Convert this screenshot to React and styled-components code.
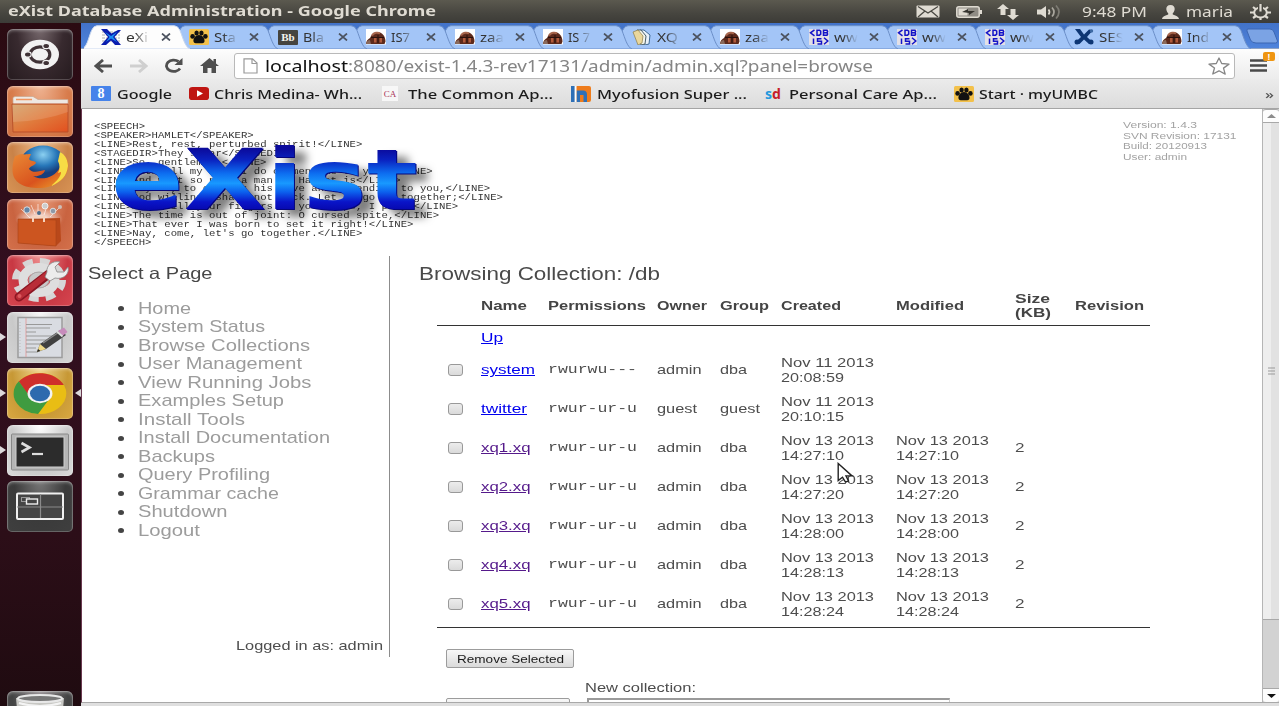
import React, { useLayoutEffect, useRef, useState } from 'react';
import styled, { createGlobalStyle } from 'styled-components';

const UI = '"Noto Sans", "Open Sans", sans-serif';
const SANS = '"Liberation Sans", Arial, sans-serif';
const MONO = '"Liberation Mono", "Courier New", monospace';

const Global = createGlobalStyle`
  * { box-sizing: border-box; }
  body { margin: 0; overflow: hidden; background: #fff; font-family: ${SANS}; }
  svg { display: block; flex: none; }
`;

/* Text stretched horizontally to a fixed width */
const FitBox = styled.span`
  display: inline-block;
  flex: none;
  width: ${(p) => p.$w}px;
  white-space: nowrap;
`;
const FitInner = styled.span`
  display: inline-block;
  white-space: pre;
  transform-origin: 0 50%;
`;
function Fit({ w, children }) {
  const ref = useRef(null);
  const [k, setK] = useState(1);
  useLayoutEffect(() => {
    const measure = () => setK(w / parseFloat(getComputedStyle(ref.current).width));
    measure();
    document.fonts.ready.then(() => ref.current && measure());
  }, [w]);
  return (
    <FitBox $w={w}>
      <FitInner ref={ref} style={{ transform: `scaleX(${k})` }}>{children}</FitInner>
    </FitBox>
  );
}

const Desktop = styled.div`
  width: 1279px;
  height: 706px;
  overflow: hidden;
  display: flex;
  flex-direction: column;
  position: relative;
`;

/* ---------- system panel ---------- */
const Panel = styled.header`
  height: 23px;
  flex: none;
  display: flex;
  align-items: center;
  padding: 0 8px;
  background: linear-gradient(#5b594f, #46453f 60%, #3c3b37);
  color: #dfdbd2;
  font: 14px/23px ${UI};
`;
const Title = styled.div`
  font-weight: 700;
  font-size: 13.5px;
  flex: 1;
`;
const Indicators = styled.div`
  display: flex;
  align-items: center;
`;
const Gap = styled.i`
  width: ${(p) => p.$w}px;
  flex: none;
`;

/* ---------- launcher ---------- */
const Body = styled.div`
  flex: 1;
  display: flex;
  min-height: 0;
`;
const Launcher = styled.nav`
  width: 81px;
  flex: none;
  padding: 6px 0 0 7px;
  background: linear-gradient(#2b0b12, #330f20 40%, #2c0e18 75%, #1f0b10);
  display: flex;
  flex-direction: column;
  gap: 5.5px;
`;
const Tile = styled.div`
  position: relative;
  width: 66px;
  height: 51px;
  flex: none;
  border-radius: 6px 6px 5px 5px;
  background: ${(p) => p.$bg};
  box-shadow: inset 0 0 0 1px rgba(255, 255, 255, 0.2), inset 0 2px 3px rgba(255, 255, 255, 0.3);
  margin-top: ${(p) => p.$top || 0}px;
`;
const Running = styled.i`
  position: absolute;
  top: 21px;
  left: -7px;
  border: solid transparent;
  border-width: 4.5px 0 4.5px 6px;
  border-left-color: #dcd8da;
`;
const Focused = styled.i`
  position: absolute;
  top: 21px;
  right: -8px;
  border: solid transparent;
  border-width: 4.5px 6px 4.5px 0;
  border-right-color: #dcd8da;
`;

/* ---------- browser ---------- */
const Browser = styled.main`
  flex: 1;
  min-width: 0;
  display: flex;
  flex-direction: column;
  background: #dfdfdf;
`;
const TabStrip = styled.div`
  height: 26px;
  flex: none;
  display: flex;
  padding: 2px 0 0 3px;
  background: linear-gradient(#4272c8, #4f84dc);
  border-bottom: 1px solid #8fa3c4;
`;
const Tab = styled.div`
  position: relative;
  width: 88.45px;
  height: 24px;
  flex: none;
  z-index: ${(p) => p.$z};
  padding-left: 17px;
`;
const TabShape = styled.svg`
  position: absolute;
  left: 0;
  top: 0;
`;
const TabInner = styled.div`
  position: relative;
  height: 24px;
  display: flex;
  align-items: center;
`;
const TabText = styled.div`
  width: 25px;
  margin-left: 5px;
  overflow: hidden;
  font: 13px/22px ${UI};
  color: #333;
  mask-image: linear-gradient(90deg, #000 35%, transparent 95%);
`;
const CloseX = styled.svg`
  margin-left: 10px;
`;
const NewTab = styled.svg`
  margin: 3px 0 0 11px;
`;
const Toolbar = styled.div`
  height: 30px;
  flex: none;
  display: flex;
  align-items: center;
  padding: 3px 12px 0 13px;
  background: linear-gradient(#fdfdfd, #ececec);
`;
const UrlBox = styled.div`
  width: 1001px;
  height: 26px;
  margin-left: 15px;
  padding: 0 4px 0 8px;
  border: 1px solid #b9b9b9;
  border-radius: 3px;
  background: #fff;
  display: flex;
  align-items: center;
  font: 15.5px/24px ${UI};
  color: #858585;
`;
const Host = styled.span`
  color: #111;
  margin-left: 7px;
`;
const Spacer = styled.i`
  flex: 1;
`;
const MenuButton = styled.div`
  position: relative;
  margin-left: 15px;
`;
const Alert = styled.span`
  position: absolute;
  left: 13px;
  top: -7px;
  width: 12px;
  height: 9px;
  border-radius: 2px;
  background: #ef9511;
  color: #fff;
  font: 700 8px/9px ${UI};
  text-align: center;
`;
const Bookmarks = styled.div`
  height: 30px;
  flex: none;
  padding: 0 4px 0 10px;
  display: flex;
  align-items: center;
  background: linear-gradient(#ebebeb, #dcdcdc);
  border-bottom: 1px solid #a5a5a5;
  color: #1b1b1b;
  font: 500 13px/22px ${UI};
`;
const Bookmark = styled.div`
  display: flex;
  align-items: center;
  gap: ${(p) => p.$gap}px;
  margin-right: ${(p) => p.$mr}px;
`;
const Glyph = styled.span`
  width: ${(p) => p.$w}px;
  height: 15px;
  display: flex;
  align-items: center;
  justify-content: center;
  border-radius: ${(p) => p.$r || 0}px;
  background: ${(p) => p.$bg || 'none'};
  color: ${(p) => p.$c};
  font: ${(p) => p.$font};
`;

/* ---------- page ---------- */
const Viewport = styled.div`
  height: 594px;
  flex: none;
  display: flex;
  background: #fff;
  border-left: 1px solid #6a3a50;
  border-bottom: 1px solid #a9a9a9;
`;
const Page = styled.div`
  flex: 1;
  overflow: hidden;
  color: #4d4d4d;
  font: 13px/14.5px ${SANS};
`;
const PageHead = styled.div`
  height: 147px;
  display: flex;
  justify-content: space-between;
  padding: 14px 25px 0 12px;
`;
const Logo = styled.div`
  position: relative;
`;
const Speech = styled.div`
  display: flex;
  flex-direction: column;
  font: 8.2px/8.92px ${MONO};
  color: #333;
`;
const LogoWord = styled.div`
  position: absolute;
  left: 17px;
  top: 15px;
  font: 700 84px/84px "DejaVu Sans", Verdana, sans-serif;
  filter: drop-shadow(1px 1px 0 #05057a) drop-shadow(11px 7px 4px rgba(0, 0, 0, 0.5));
  ${FitInner} {
    color: transparent;
    background: linear-gradient(#0b0b9c 13%, #0a22c0 26%, #0d6df0 42%, #1899ff 54%, #0c62ee 64%, #0a14c8 76%, #0606a8 88%);
    background-clip: text;
  }
`;
const Version = styled.div`
  display: flex;
  flex-direction: column;
  width: 114px;
  font-size: 9.6px;
  line-height: 10.7px;
  margin-top: -3px;
  color: #a3a3a3;
`;
const Columns = styled.div`
  display: flex;
`;
const Side = styled.aside`
  width: 308px;
  height: 401px;
  flex: none;
  border-right: 1px solid #8c8c8c;
  padding: 8px 6px 0 6px;
  display: flex;
  flex-direction: column;
`;
const SideTitle = styled.div`
  font-size: 16.5px;
  line-height: 19px;
  color: #474747;
`;
const NavList = styled.ul`
  list-style: none;
  margin: 15.5px 0 0;
  padding: 0 0 0 30px;
  flex: 1;
`;
const NavItem = styled.li`
  height: 18.53px;
  display: flex;
  align-items: center;
  font-size: 16.2px;
  line-height: 18.5px;
  color: #9c9c9c;
`;
const Bullet = styled.i`
  width: 6px;
  height: 5px;
  margin: 2px 14px 0 0;
  border-radius: 50%;
  background: #444;
`;
const LoggedIn = styled.div`
  align-self: flex-end;
  margin-bottom: 4px;
`;
const Content = styled.section`
  padding: 8px 0 0 29px;
`;
const ContentTitle = styled.div`
  font-size: 17.6px;
  line-height: 20px;
  color: #4a4a4a;
`;
const Table = styled.div`
  margin: 2px 0 0 18px;
  width: 713px;
  border-bottom: 1px solid #333;
  padding-bottom: 3px;
`;
const Row = styled.div`
  display: grid;
  grid-template-columns: 43.5px 67px 109.5px 62.5px 61px 115px 119px 60px 74.500px;
  align-items: center;
  height: ${(p) => p.$h}px;
  ${(p) => p.$head && 'font-weight: 700; border-bottom: 1px solid #333; color: #444; padding-top: 1px;'}
`;
const Cell = styled.div`
  display: flex;
  flex-direction: column;
`;
const Perm = styled(Cell)`
  font-family: ${MONO};
`;
const Check = styled.i`
  width: 15px;
  height: 12px;
  margin: -2px 0 0 11px;
  border: 1px solid #999;
  border-radius: 3px;
  background: linear-gradient(#ececec, #dadada);
`;
const Link = styled.a`
  color: ${(p) => (p.$visited ? '#551a8b' : '#0000ee')};
  ${FitInner} {
    text-decoration: underline;
  }
`;
const Actions = styled.div`
  display: flex;
  flex-direction: column;
  align-items: flex-start;
  padding: 21px 0 0 27px;
`;
const Button = styled.button`
  display: block;
  width: ${(p) => p.$w}px;
  height: 19px;
  padding: 0 0 0 10px;
  text-align: left;
  border: 1px solid #9c9c9c;
  border-radius: 2px;
  background: linear-gradient(#f8f8f8, #dadada);
  color: #1a1a1a;
  font: 11.5px/16px ${SANS};
`;
const CreateRow = styled.div`
  display: grid;
  grid-template-columns: 139px auto;
  margin-top: 13px;
  row-gap: 2px;
`;
const NewLabel = styled.div`
  grid-column: 2;
`;
const Input = styled.div`
  width: 363px;
  height: 20px;
  margin-left: 2px;
  border: 2px solid #9a9a9a;
  border-right: 1px solid #ccc;
`;
const Scrollbar = styled.div`
  width: 17px;
  flex: none;
  display: flex;
  flex-direction: column;
  border-left: 1px solid #b5b5b5;
  background: #d2d2d2;
`;
const Arrow = styled.div`
  height: 14px;
  display: flex;
  align-items: center;
  justify-content: center;
  background: #fdfdfd;
  border: solid #a8a8a8;
  border-width: ${(p) => (p.$up ? '1px 0 1px 0' : '1px 0 0 0')};
  border-radius: ${(p) => (p.$up ? '3px 3px 0 0' : '0 0 3px 3px')};
`;
const Thumb = styled.div`
  height: 497px;
  display: flex;
  align-items: center;
  justify-content: center;
  background: linear-gradient(90deg, #eeeeee 50%, #e2e2e2 50%);
  border-bottom: 1px solid #a8a8a8;
`;
const Pointer = styled.svg`
  position: absolute;
  left: 837px;
  top: 462px;
`;

/* ---------- favicons ---------- */
const Ico = ({ children, w = 20, h = 16 }) => (
  <svg width={w} height={h} viewBox="0 0 20 16" preserveAspectRatio="none">{children}</svg>
);
const Paw = () => (
  <Ico>
    <rect width="20" height="16" rx="1.5" fill="#f3c14b" />
    <g fill="#111">
      <ellipse cx="3.6" cy="7.4" rx="2.300" ry="2.300" /><ellipse cx="7.6" cy="4" rx="2.200" ry="2.600" />
      <ellipse cx="12.4" cy="4" rx="2.200" ry="2.600" /><ellipse cx="16.4" cy="7.4" rx="2.300" ry="2.300" />
      <path d="M10 6c3.500 0 6 3.500 5.500 6.500-.5 2.200-3.500 1.700-5.500 1.700s-5 .5-5.500-1.700C4 9.500 6.500 6 10 6z" />
    </g>
  </Ico>
);
const ExistIcon = () => (
  <Ico>
    <path d="M1 3h18M1 6h18M1 9h18M1 12h18" stroke="#999" strokeWidth=".8" strokeDasharray="3 1" />
    <path d="M0 0h6l4.500 4.500L17 1h3l-6.500 7L20 16h-6l-4-4.500L5 16H0l7-8z" fill="#0a1cae" />
    <path d="M4 3l6 4 6-4-4 5 4 5-6-3.500L5 13l3.500-5z" fill="#1b8df2" />
  </Ico>
);
const Bb = () => (
  <Glyph $w={20} $bg="#45443f" $c="#f4f4ee" $r={1} $font='700 11px/14px "Liberation Serif", serif'>Bb</Glyph>
);
const Beetle = () => (
  <Ico>
    <rect width="20" height="15.500" fill="#fff" />
    <path d="M0 15c0-3 2-5 4-6C5.500 5 8 3 11 3c5 0 8.500 4 8.500 9.500l-1 2.500z" fill="#5d2a1c" />
    <path d="M6 6.500c2-3 6-3.500 8-2" stroke="#a8664c" strokeWidth="2" fill="none" />
    <path d="M8 9h2.500v4.500H8zM13.500 9H16v4.500h-2.500z" fill="#b05a3c" />
    <path d="M12 6v8M5 8.500h13" stroke="#2a110b" />
    <path d="M0 15c0-2 2-4 4-4l1 4z" fill="#8a6a5c" />
  </Ico>
);
const Books = () => (
  <Ico>
    <path d="M8 1h4l6 5-1 9-4 1z" fill="#e9f1fa" stroke="#3e6a94" />
    <path d="M5 1h4l5 6-1 8-4 1z" fill="#f5f5ea" stroke="#4a5f68" />
    <path d="M1 3l5-2 5 6-1 7-4 2z" fill="#ead79c" stroke="#8b7b45" strokeWidth=".7" />
  </Ico>
);
const Dbis = () => (
  <Ico>
    <rect width="20" height="16" fill="#e3e0e6" />
    <g stroke="#1414c8" strokeWidth="1.500" fill="none">
      <path d="M5.500 .8L1.500 3.800 5.500 6.800M8 1.200v5h2.500l1.200-1v-3l-1.200-1zM14.500 1.200v5h3.500l.6-1.200-.6-1.200.6-1.200-.6-1.400zM14.500 3.700h3.500M4.500 9.500v5.500M12.500 9.800H8.500v2.500h4V15h-4M15 8.800l3.800 3.200L15 15.200" />
    </g>
  </Ico>
);
const Ses = () => (
  <Ico>
    <path d="M1 0h5l4 5.500L15 .5l4 .5-6 7 6 5.500-4 1.500-5-4.500L5.500 15 1 13.500l6-5.500z" fill="#0d3674" />
    <circle cx="3" cy="13" r="2.500" fill="#0d3674" /><circle cx="17" cy="13" r="2.500" fill="#0d3674" />
    <circle cx="17.500" cy="2" r="1.700" fill="#3d6aa4" />
  </Ico>
);

const TABS = [
  [ExistIcon, 'eXi', 22], [Paw, 'Sta', 22], [Bb, 'Bla', 21], [Beetle, 'IS7', 19], [Beetle, 'zaa', 24],
  [Beetle, 'IS 7', 22], [Books, 'XQ', 21], [Beetle, 'zaa', 24], [Dbis, 'ww', 24], [Dbis, 'ww', 24],
  [Dbis, 'ww', 24], [Ses, 'SES', 25], [Beetle, 'Ind', 22],
];

const NAV = [
  ['Home', 53], ['System Status', 127], ['Browse Collections', 172], ['User Management', 164],
  ['View Running Jobs', 173.5], ['Examples Setup', 146], ['Install Tools', 107], ['Install Documentation', 192],
  ['Backups', 77], ['Query Profiling', 132], ['Grammar cache', 141], ['Shutdown', 89.5], ['Logout', 62],
];

const SPEECH = [
  '<SPEECH>',
  '<SPEAKER>HAMLET</SPEAKER>',
  '<LINE>Rest, rest, perturbed spirit!</LINE>',
  '<STAGEDIR>They swear</STAGEDIR>',
  '<LINE>So, gentlemen,</LINE>',
  '<LINE>With all my love I do commend me to you:</LINE>',
  '<LINE>And what so poor a man as Hamlet is</LINE>',
  '<LINE>May do, to express his love and friending to you,</LINE>',
  '<LINE>God willing, shall not lack. Let us go in together;</LINE>',
  '<LINE>And still your fingers on your lips, I pray.</LINE>',
  '<LINE>The time is out of joint: O cursed spite,</LINE>',
  '<LINE>That ever I was born to set it right!</LINE>',
  "<LINE>Nay, come, let's go together.</LINE>",
  '</SPEECH>',
];

const ROWS = [
  { name: 'system', nw: 54, perm: 'rwurwu---', owner: 'admin', group: 'dba', c: ['Nov 11 2013', '20:08:59'] },
  { name: 'twitter', nw: 46, perm: 'rwur-ur-u', owner: 'guest', group: 'guest', c: ['Nov 11 2013', '20:10:15'] },
  ...['14:27:10', '14:27:20', '14:28:00', '14:28:13', '14:28:24'].map((t, i) => ({
    name: `xq${i + 1}.xq`, nw: 49.5, perm: 'rwur-ur-u', owner: 'admin', group: 'dba',
    c: ['Nov 13 2013', t], m: ['Nov 13 2013', t], visited: true,
  })),
];
const WORD = { admin: 44.5, guest: 40, dba: 27 };

const TileArt = ({ children }) => (
  <svg width="66" height="51" viewBox="0 0 66 51">{children}</svg>
);

function LauncherBar() {
  return (
    <Launcher>
      <Tile $bg="radial-gradient(ellipse at 50% 0, #77696d, #382a2f 50%, #251a1e)">
        <TileArt>
          <ellipse cx="33" cy="25.500" rx="19" ry="14.800" fill="#f2f2f2" />
          <ellipse cx="33" cy="25.500" rx="9.800" ry="7.700" fill="none" stroke="#3f3236" strokeWidth="3.200" />
          <g fill="#3f3236" stroke="#f2f2f2" strokeWidth="1.200">
            <ellipse cx="20.800" cy="25.500" rx="3.400" ry="2.700" /><ellipse cx="39.200" cy="17" rx="3.400" ry="2.700" /><ellipse cx="39.200" cy="34" rx="3.400" ry="2.700" />
          </g>
        </TileArt>
      </Tile>
      <Tile $bg="radial-gradient(ellipse at 50% 0, #efb493, #d87c4c 60%, #cd6d3d)">
        <TileArt>
          <defs><linearGradient id="fold" x1="0" y1="0" x2="1" y2="1"><stop offset="0" stopColor="#d2a066" /><stop offset=".5" stopColor="#e07a3c" /><stop offset="1" stopColor="#e2501f" /></linearGradient></defs>
          <path d="M6 11.500l2-1h18l5 3h30v6H6z" fill="#eee8e2" stroke="#c9a58d" strokeWidth=".7" />
          <path d="M9 13.500h16" stroke="#f0955f" strokeWidth="1.500" />
          <path d="M5 18h56v28H6z" fill="url(#fold)" stroke="#b9512a" />
          <path d="M6 36q30-1 55-10v-7H5z" fill="#fff" opacity=".13" />
        </TileArt>
      </Tile>
      <Tile $bg="radial-gradient(ellipse at 50% 0, #edbb8b, #c98248 60%, #d89455)">
        <TileArt>
          <defs><radialGradient id="globe" cx=".5" cy=".25"><stop offset="0" stopColor="#8bd0f1" /><stop offset=".6" stopColor="#2777b9" /><stop offset="1" stopColor="#163f7d" /></radialGradient>
            <linearGradient id="fox" x1="0" y1="0" x2="1" y2="1"><stop offset="0" stopColor="#e98a35" /><stop offset=".6" stopColor="#d9531e" /><stop offset="1" stopColor="#efa92c" /></linearGradient></defs>
          <ellipse cx="36" cy="22" rx="23" ry="18.500" fill="url(#globe)" />
          <path d="M8 14c2 0 4-2 7-2 3 1 5 0 9 0l-2 5c2 3 6 1 7 4-2 3-6 3-7 6 4 5 11 2 16 1-1 5-8 7-12 6 8 5 22 2 27-9 3-5 2-9 1-14 5 3 8 9 7 15-2 12-14 20-29 20S5 41 5.500 27c0-5 1-9 2.500-13z" fill="url(#fox)" />
          <path d="M53 10c6 3 8 9 8 14-1 10-7 16-17 20 7-6 10-10 10-14l-3 1c2-4 2-8 0-12z" fill="#f7dc45" />
        </TileArt>
      </Tile>
      <Tile $bg="radial-gradient(ellipse at 50% 0, #e89c7a, #c96340 60%, #d4714b)">
        <TileArt>
          <defs><radialGradient id="glow"><stop offset="0" stopColor="#fff" /><stop offset="1" stopColor="#fff" stopOpacity="0" /></radialGradient></defs>
          <ellipse cx="32" cy="20" rx="24" ry="11" fill="url(#glow)" />
          <path d="M14 10l9 9M52 9l-9 9M31 5v9M24 6l4 9M40 7l-3 9" stroke="#fff" opacity=".6" />
          <circle cx="20" cy="11" r="3.200" fill="#6487a8" stroke="#ddd" /><circle cx="38" cy="7" r="3" fill="#ccc" stroke="#eee" />
          <circle cx="46" cy="12" r="2.800" fill="#8e99a7" stroke="#ddd" /><circle cx="32" cy="14" r="2" fill="#4a6d8b" /><circle cx="53" cy="8" r="2" fill="#cdbfb8" />
          <path d="M11 20l42-1 1 23-5 5-38-3z" fill="#b9481a" /><path d="M11 20l38 1v26l-38-3z" fill="#cc5520" stroke="#a84318" strokeWidth=".6" />
          <path d="M26 23v-5h11v5" fill="none" stroke="#f6d3bd" strokeWidth="2" />
        </TileArt>
      </Tile>
      <Tile $bg="radial-gradient(ellipse at 50% 0, #ef8f8f, #c83843 60%, #d64650)">
        <TileArt>
          <ellipse cx="32" cy="25" rx="23" ry="18" fill="none" stroke="#d6d6d6" strokeWidth="8" strokeDasharray="9.300 6.900" />
          <ellipse cx="32" cy="25" rx="16" ry="12.500" fill="none" stroke="#dedede" strokeWidth="9" />
          <ellipse cx="32" cy="25" rx="10" ry="8" fill="#c9c9c9" stroke="#aaa" />
          <path d="M12 42L43 18" stroke="#8c1622" strokeWidth="9" strokeLinecap="round" />
          <path d="M12 42L42 18" stroke="#b92d37" strokeWidth="6" strokeLinecap="round" />
          <path d="M40 17c-1-6 5-12 13-10l-5 5 2 5 7 0 4-5c2 7-5 13-13 11l-5 3-5-4z" fill="#ececec" stroke="#888" strokeWidth=".8" />
          <circle cx="12.500" cy="41" r="2" fill="#dc5a5f" />
        </TileArt>
      </Tile>
      <Tile $bg="radial-gradient(ellipse at 50% 0, #f6f6f6, #c9c9c9 60%, #d6d6d6)">
        <Running />
        <TileArt>
          <rect x="11" y="5.500" width="44" height="40" fill="#d9dce2" stroke="#9c9c9c" strokeWidth="1.500" />
          <path d="M19 6v39" stroke="#e0a0a0" /><path d="M13 10v32" stroke="#bbb" strokeDasharray="1 2" />
          <path d="M19 12.500h26M19 16h24M19 20h10M19 24h26M19 28h20M19 32h18M19 36h10M19 40h12" stroke="#999" strokeWidth="1.200" />
          <path d="M30 40l3-8 20-14 6 5-20 14z" fill="#404040" /><path d="M30 40l3-8 6 5z" fill="#f0d987" /><path d="M30 40l1-3 2.500 2z" fill="#222" />
          <path d="M36 31l19-13" stroke="#888" strokeWidth="1.500" /><path d="M51 19l6-3.500 3.500 4.500-5 4z" fill="#c78bbb" /><path d="M50 19.500l5.500 5" stroke="#ddd" strokeWidth="2" />
        </TileArt>
      </Tile>
      <Tile $bg="radial-gradient(ellipse at 50% 0, #f1d78f, #c79835 60%, #d9a942)">
        <Running /><Focused />
        <svg width="66" height="51" viewBox="0 0 66 51">
          <g transform="translate(33 25.500) scale(1.285 1)">
            <circle r="20.500" fill="#e9bd14" />
            <path d="M0-8.500H18.500A20.500 20.500 0 0 0-16.500-12L-8 4z" fill="#cf2f2b" />
            <path d="M-16.500-12.200A20.500 20.500 0 0 0-1.500 20.500L7.500 5-6 6.500z" fill="#3f9b40" />
            <circle r="9.700" fill="#f3f3f3" /><circle r="7.800" fill="#2d6aae" />
          </g>
        </svg>
      </Tile>
      <Tile $bg="radial-gradient(ellipse at 50% 0, #fff, #c9c9c9 60%, #dadada)">
        <Running />
        <TileArt>
          <rect x="4.500" y="9" width="57" height="36" rx="1" fill="#b5b5b5" stroke="#888" strokeWidth="1" />
          <rect x="9" y="12" width="48" height="30" fill="#2c2c2c" stroke="#d0d0d0" />
          <path d="M14.500 18l8 4.500-8 4.500" stroke="#ddd" strokeWidth="2.600" fill="none" /><path d="M25 29h11" stroke="#ddd" strokeWidth="2.200" />
        </TileArt>
      </Tile>
      <Tile $bg="radial-gradient(ellipse at 50% 0, #777, #3b3b3b 55%, #3f3f3f)">
        <TileArt>
          <rect x="10" y="12.500" width="46" height="25.500" rx="1" fill="#454545" stroke="#f0f0f0" strokeWidth="2" />
          <path d="M33.500 13v24M10 26h46" stroke="#8a8a8a" strokeWidth="1.200" />
          <rect x="14.500" y="16.500" width="8" height="4" fill="none" stroke="#999" /><rect x="19.500" y="18" width="11" height="5" fill="#444" stroke="#eee" strokeWidth="1.400" />
        </TileArt>
      </Tile>
      <Tile $top={153.5} $bg="radial-gradient(ellipse at 50% 0, #8b8488, #444 60%)">
        <TileArt>
          <path d="M9 7l4 44h40l4-44z" fill="#c8c8c4" />
          <ellipse cx="33" cy="7.500" rx="22" ry="3.500" fill="#777" stroke="#e8e8e8" strokeWidth="2.200" />
          <path d="M12 12q21 6 42 0" stroke="#f4f4f4" strokeWidth="2" fill="none" />
        </TileArt>
      </Tile>
    </Launcher>
  );
}

function SystemPanel() {
  return (
    <Panel>
      <Title><Fit w={428}>eXist Database Administration - Google Chrome</Fit></Title>
      <Indicators>
        <svg width="24" height="13" viewBox="0 0 24 13"><rect x=".5" y=".5" width="23" height="12" rx="1" fill="#dfdbd2" /><path d="M2 1.500l10 6.500 10-6.500M2 12l7-6M22 12l-7-6" stroke="#4a4943" strokeWidth="1.300" fill="none" /></svg>
        <Gap $w={16} />
        <svg width="26" height="12" viewBox="0 0 26 12"><rect x=".8" y=".8" width="22.400" height="10.400" rx="2" fill="#8f8c85" stroke="#dfdbd2" strokeWidth="1.500" /><path d="M24 4h2v4h-2" fill="#dfdbd2" /><path d="M2.500 2.500h9v7h-9z" fill="#dfdbd2" /><path d="M6 6l6-3v2l7 0-6 4V7z" fill="#35342f" /></svg>
        <Gap $w={15} />
        <svg width="22" height="16" viewBox="0 0 22 16"><path d="M6 0l6 5H8.500v6h-5V5H0zM16 16l6-5h-3.500V5h-5v6H10z" fill="#dfdbd2" /></svg>
        <Gap $w={18} />
        <svg width="25" height="14" viewBox="0 0 25 14"><path d="M0 4.500h4L9 1v12L4 9.500H0z" fill="#dfdbd2" /><path d="M11.500 4.500q2 2.500 0 5" stroke="#dfdbd2" strokeWidth="1.700" fill="none" /><path d="M15 2.500q4 4.500 0 9" stroke="#a9a69d" strokeWidth="1.700" fill="none" /><path d="M19 .5q6 6.500 0 13" stroke="#7d7b73" strokeWidth="1.700" fill="none" /></svg>
        <Gap $w={20} />
        <Fit w={65}>9:48 PM</Fit>
        <Gap $w={15} />
        <svg width="17" height="14" viewBox="0 0 17 14"><path d="M8.500 0c3 0 4.200 2 4.200 4S11 8 10.500 9c1 1.500 6 1.500 6.500 5H0c.5-3.500 5.500-3.500 6.500-5C6 8 4.300 6 4.300 4S5.500 0 8.500 0z" fill="#dfdbd2" /></svg>
        <Gap $w={7} />
        <Fit w={47}>maria</Fit>
        <Gap $w={17} />
        <svg width="21" height="16" viewBox="0 0 21 16"><ellipse cx="10.500" cy="8.500" rx="6.300" ry="5" fill="none" stroke="#dfdbd2" strokeWidth="2" /><path d="M10.500 0v8" stroke="#47463f" strokeWidth="5" /><path d="M10.500 0v7.500M0 8.500h4M17 8.500h4M3 3l3 2.300M18 3l-3 2.300M3 14l3-2M18 14l-3-2M10.500 13v3" stroke="#dfdbd2" strokeWidth="2.200" /></svg>
      </Indicators>
    </Panel>
  );
}

function BrowserTabs() {
  return (
    <TabStrip>
      {TABS.map(([Icon, label, w], i) => (
        <Tab key={i} $z={20 - i}>
          <TabShape width="106" height="24" viewBox="0 0 106 24">
            <path d="M-3 24C3 23 4 14 7.500 5.500Q9.500.7 13 .7H90Q94 .7 96 5.500C99 13 101 22 106 24z" fill={i ? '#a3c5f7' : '#fdfdfd'} stroke={i ? '#6c8fc8' : '#c9d7ee'} strokeWidth="1" />
          </TabShape>
          <TabInner>
            <Icon />
            <TabText><Fit w={w}>{label}</Fit></TabText>
            <CloseX width="10" height="8" viewBox="0 0 10 8"><path d="M1 .5l8 7M9 .5l-8 7" stroke="#4c5360" strokeWidth="1.700" /></CloseX>
          </TabInner>
        </Tab>
      ))}
      <NewTab width="34" height="16" viewBox="0 0 34 16"><path d="M3 1h22q3 0 4 3l3.500 9q0 2-2 2H11q-4 0-5.500-3L2 3q-.5-2 1-2z" fill="#7ba3e4" stroke="#3c67b3" /></NewTab>
    </TabStrip>
  );
}

function BrowserBars() {
  return (
    <>
      <Toolbar>
        <svg width="19" height="14" viewBox="0 0 19 14"><path d="M9 1L2 7l7 6M2 7h16" stroke="#4f4f4f" strokeWidth="2.900" fill="none" /></svg>
        <Gap $w={17} />
        <svg width="18" height="14" viewBox="0 0 18 14"><path d="M9 1l7 6-7 6M16 7H0" stroke="#cfcfcf" strokeWidth="2.900" fill="none" /></svg>
        <Gap $w={16} />
        <svg width="20" height="15" viewBox="0 0 20 15"><path d="M16 10.500A7.200 5.700 0 1 1 14.500 3.500" stroke="#4f4f4f" strokeWidth="2.800" fill="none" /><path d="M18.500 0v7h-8z" fill="#4f4f4f" /></svg>
        <Gap $w={16} />
        <svg width="19" height="15" viewBox="0 0 19 15"><path d="M9.500 0L0 8h3v7h4.500v-5h4v5H16V8h3l-3-2.500V1h-2.500v2.500z" fill="#4f4f4f" /></svg>
        <UrlBox>
          <svg width="15" height="16" viewBox="0 0 15 16"><path d="M1 .8h8.500L14 5v10H1zM9 1v4.500h5" fill="#fff" stroke="#999" strokeWidth="1.200" /></svg>
          <Host><Fit w={83}>localhost</Fit></Host>
          <Fit w={525}>:8080/exist-1.4.3-rev17131/admin/admin.xql?panel=browse</Fit>
          <Spacer />
          <svg width="22" height="18" viewBox="0 0 22 18"><path d="M11 1l2.700 5.500 7.300.600-5.500 4 1.700 6-6.200-3.300L4.800 17l1.700-6L1 7.100l7.300-.6z" fill="#fff" stroke="#868686" strokeWidth="1.300" strokeLinejoin="round" /></svg>
        </UrlBox>
        <MenuButton>
          <svg width="17" height="13" viewBox="0 0 17 13"><path d="M0 1.500h17M0 6.500h17M0 11.500h17" stroke="#4a4a4a" strokeWidth="2.600" /></svg>
          <Alert>!</Alert>
        </MenuButton>
      </Toolbar>
      <Bookmarks>
        <Bookmark $gap={6} $mr={17}>
          <Glyph $w={20} $bg="#4683ea" $c="#fff" $r={1} $font='700 14px/14px "Liberation Serif", serif'>8</Glyph><Fit w={55}>Google</Fit>
        </Bookmark>
        <Bookmark $gap={5} $mr={20}>
          <Ico h={13}><rect width="20" height="16" rx="3.500" fill="#bf1512" /><path d="M8 4l6 4-6 4z" fill="#fff" /></Ico><Fit w={148}>Chris Medina- Wh...</Fit>
        </Bookmark>
        <Bookmark $gap={10} $mr={18}>
          <Glyph $w={16} $bg="#f7f7f7" $c="#a83256" $font='9px/10px "Liberation Serif", serif'>CA</Glyph><Fit w={145}>The Common Ap...</Fit>
        </Bookmark>
        <Bookmark $gap={6} $mr={17}>
          <Ico><rect x="4" width="16" height="16" rx="2" fill="#ee7c1c" /><path d="M0 0h3.500v16H0zM5.500 16V4.500H12q4 0 4 4V16h-3.500V9H9v7z" fill="#2e70b7" /><path d="M4 0h1.500v16H4z" fill="#fff" /></Ico><Fit w={150}>Myofusion Super ...</Fit>
        </Bookmark>
        <Bookmark $gap={7} $mr={17}>
          <Glyph $w={18} $c="#c51d28" $font={`700 14px/14px ${UI}`}><Sd>s</Sd>d</Glyph><Fit w={148}>Personal Care Ap...</Fit>
        </Bookmark>
        <Bookmark $gap={5} $mr={0}><Paw /><Fit w={119}>Start · myUMBC</Fit></Bookmark>
        <Spacer />
        <More><Fit w={9}>»</Fit></More>
      </Bookmarks>
    </>
  );
}
const Sd = styled.span`
  color: #2499dd;
`;
const More = styled.span`
  color: #555;
  padding-right: 1px;
`;

const HEAD = [[], [['Name', 46]], [['Permissions', 98]], [['Owner', 50]], [['Group', 49]], [['Created', 60]], [['Modified', 68]], [['Size', 35], ['(KB)', 36]], [['Revision', 69]]];

function WebPage() {
  return (
    <Page>
      <PageHead>
        <Logo>
          <Speech>{SPEECH.map((t) => <Fit key={t} w={t.length * 6.39}>{t}</Fit>)}</Speech>
          <LogoWord><Fit w={307}>eXist</Fit></LogoWord>
        </Logo>
        <Version>
          <Fit w={74}>Version: 1.4.3</Fit>
          <Fit w={113.5}>SVN Revision: 17131</Fit>
          <Fit w={84}>Build: 20120913</Fit>
          <Fit w={64}>User: admin</Fit>
        </Version>
      </PageHead>
      <Columns>
        <Side>
          <SideTitle><Fit w={124.5}>Select a Page</Fit></SideTitle>
          <NavList>
            {NAV.map(([t, w]) => <NavItem key={t}><Bullet /><Fit w={w}>{t}</Fit></NavItem>)}
          </NavList>
          <LoggedIn><Fit w={147}>Logged in as: admin</Fit></LoggedIn>
        </Side>
        <Content>
          <ContentTitle><Fit w={241}>Browsing Collection: /db</Fit></ContentTitle>
          <Table>
            <Row $head $h={40}>
              {HEAD.map((h, i) => <Cell key={i}>{h.map(([t, w]) => <Fit key={t} w={w}>{t}</Fit>)}</Cell>)}
            </Row>
            <Row $h={25}><Cell /><Link><Fit w={22}>Up</Fit></Link></Row>
            {ROWS.map((r) => (
              <Row key={r.name} $h={39}>
                <Check />
                <Link $visited={r.visited}><Fit w={r.nw}>{r.name}</Fit></Link>
                <Perm><Fit w={89}>{r.perm}</Fit></Perm>
                <Cell><Fit w={WORD[r.owner]}>{r.owner}</Fit></Cell>
                <Cell><Fit w={WORD[r.group]}>{r.group}</Fit></Cell>
                <Cell><Fit w={93}>{r.c[0]}</Fit><Fit w={63}>{r.c[1]}</Fit></Cell>
                <Cell>{r.m && <><Fit w={93}>{r.m[0]}</Fit><Fit w={63}>{r.m[1]}</Fit></>}</Cell>
                <Cell>{r.m && <Fit w={9.5}>2</Fit>}</Cell>
                <Cell />
              </Row>
            ))}
          </Table>
          <Actions>
            <Button $w={128}><Fit w={107}>Remove Selected</Fit></Button>
            <CreateRow>
              <NewLabel><Fit w={111}>New collection:</Fit></NewLabel>
              <Button $w={124}><Fit w={103}>Create Collection</Fit></Button>
              <Input />
            </CreateRow>
          </Actions>
        </Content>
      </Columns>
    </Page>
  );
}

export default function App() {
  return (
    <Desktop>
      <Global />
      <SystemPanel />
      <Body>
        <LauncherBar />
        <Browser>
          <BrowserTabs />
          <BrowserBars />
          <Viewport>
            <WebPage />
            <Scrollbar>
              <Arrow $up><svg width="9" height="4" viewBox="0 0 9 4"><path d="M0 4L4.500 0 9 4z" fill="#8c8c8c" /></svg></Arrow>
              <Thumb><svg width="7" height="8" viewBox="0 0 7 8"><path d="M0 1h7M0 4h7M0 7h7" stroke="#999" /></svg></Thumb>
              <Spacer />
              <Arrow><svg width="9" height="4" viewBox="0 0 9 4"><path d="M0 0L4.500 4 9 0z" fill="#111" /></svg></Arrow>
            </Scrollbar>
          </Viewport>
        </Browser>
      </Body>
      <Pointer width="18" height="22" viewBox="0 0 18 22"><path d="M1.200 1.500v17l4.300-3.300 3 5 3-1.300-2.500-5h6z" fill="#fff" stroke="#222" strokeWidth="1.400" /></Pointer>
    </Desktop>
  );
}
